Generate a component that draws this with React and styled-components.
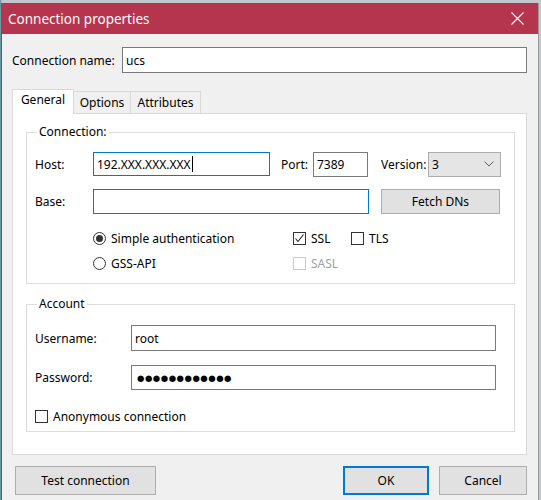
import React from 'react';
import styled, { createGlobalStyle } from 'styled-components';

const FONT = `"Noto Sans", "Open Sans", "DejaVu Sans", sans-serif`;

const colors = {
  TITLE: '#b5354f',
  FACE: '#f0f0f0',
  WHITE: '#ffffff',
  TAB_BORDER: '#d9d9d9',
  GROUP_BORDER: '#dcdcdc',
  INPUT_BORDER: '#7a7a7a',
  FOCUS: '#0078d7',
  BUTTON: '#e1e1e1',
  BUTTON_BORDER: '#adadad',
  DISABLED: '#a0a0a0',
  INK: '#000000',
};

const GlobalStyle = createGlobalStyle`
  html, body {
    margin: 0;
    padding: 0;
    background: #c3c6ca;
  }
  body {
    font-family: ${FONT};
    font-size: 12px;
    color: ${colors.INK};
  }
`;

const Desktop = styled.div`
  width: 541px;
  height: 500px;
  overflow: hidden;
  box-sizing: border-box;
  padding: 3px 2px 0 1px;
  background: linear-gradient(90deg, #3a8b95 0, #9aa3ad 1px, #c3c6ca 2px);
`;

const Window = styled.div`
  width: 538px;
  height: 497px;
  box-sizing: border-box;
  border-left: 1px solid ${colors.TITLE};
  border-right: 1px solid #9a9a9a;
  background: ${colors.FACE};
  display: flex;
  flex-direction: column;
`;

const TitleBar = styled.div`
  height: 31px;
  flex: none;
  background: ${colors.TITLE};
  color: ${colors.WHITE};
  font-size: 13.5px;
  display: flex;
  align-items: center;
  justify-content: space-between;
  padding: 0 14px 0 6px;
`;

const Body = styled.div`
  padding: 13px 11px 0 10px;
  display: flex;
  flex-direction: column;
`;

const NameRow = styled.div`
  display: flex;
  align-items: center;
  padding-left: 0;
`;

const Label = styled.div`
  width: ${p => p.w}px;
  flex: none;
  white-space: nowrap;
  color: ${p => (p.disabled ? colors.DISABLED : colors.INK)};
`;

const Field = styled.div`
  box-sizing: border-box;
  width: ${p => (p.w ? `${p.w}px` : 'auto')};
  flex: ${p => (p.w ? 'none' : '1')};
  height: ${p => p.h || 25}px;
  background: ${colors.WHITE};
  border: 1px solid ${p => (p.focus ? colors.FOCUS : colors.INPUT_BORDER)};
  padding-left: 3px;
  display: flex;
  align-items: center;
  white-space: nowrap;
  overflow: hidden;
`;

const Caret = styled.span`
  display: inline-block;
  width: 1px;
  height: 16px;
  background: ${colors.INK};
  margin-left: 1px;
`;

const Dots = styled.span`
  font-family: "DejaVu Sans", sans-serif;
  font-size: 8.5px;
  letter-spacing: 0.5px;
  padding-left: 2px;
`;

const TabStrip = styled.div`
  display: flex;
  align-items: flex-end;
  margin-top: 16px;
  height: 24px;
  position: relative;
  z-index: 1;
`;

const Tab = styled.div`
  box-sizing: border-box;
  width: ${p => p.w}px;
  height: ${p => (p.active ? 25 : 22)}px;
  margin-bottom: ${p => (p.active ? -1 : 0)}px;
  background: ${p => (p.active ? colors.WHITE : colors.FACE)};
  border: 1px solid ${colors.TAB_BORDER};
  border-bottom: none;
  margin-left: ${p => (p.active ? 0 : -1)}px;
  padding-top: ${p => (p.active ? 1 : 2)}px;
  text-align: center;
`;

const Panel = styled.div`
  box-sizing: border-box;
  height: 342px;
  background: ${colors.WHITE};
  border: 1px solid ${colors.TAB_BORDER};
  padding: 10px 11px 0 13px;
  display: flex;
  flex-direction: column;
  gap: 12px;
`;

const Group = styled.fieldset`
  margin: 0;
  border: 1px solid ${colors.GROUP_BORDER};
  padding: 0 8px ${p => p.pb}px 8px;
  display: flex;
  flex-direction: column;
  min-inline-size: 0;
`;

const Legend = styled.legend`
  padding: 0 2px;
  margin-left: 2px;
  line-height: 16px;
`;

const Row = styled.div`
  display: flex;
  align-items: center;
  margin-top: ${p => p.mt || 0}px;
  height: ${p => p.h || 16}px;
`;

const Gap = styled.div`
  width: ${p => p.w}px;
  flex: none;
`;

const Select = styled.div`
  box-sizing: border-box;
  width: 73px;
  height: 25px;
  background: #e5e5e5;
  border: 1px solid ${colors.BUTTON_BORDER};
  padding: 0 6px 0 3px;
  display: flex;
  align-items: center;
  justify-content: space-between;
`;

const Button = styled.div`
  box-sizing: border-box;
  width: ${p => p.w}px;
  height: ${p => p.h || 29}px;
  background: ${colors.BUTTON};
  border: ${p => (p.primary ? `2px solid ${colors.FOCUS}` : `1px solid ${colors.BUTTON_BORDER}`)};
  display: flex;
  align-items: center;
  justify-content: center;
  flex: none;
`;

const Choice = styled.div`
  display: flex;
  align-items: center;
  gap: 5px;
  width: ${p => (p.w ? `${p.w}px` : 'auto')};
  flex: none;
  color: ${p => (p.disabled ? colors.DISABLED : colors.INK)};
`;

const Box = styled.div`
  box-sizing: border-box;
  width: 13px;
  height: 13px;
  border: 1px solid ${p => (p.disabled ? '#cccccc' : '#333333')};
  background: ${colors.WHITE};
  display: flex;
  align-items: center;
  justify-content: center;
`;

const Round = styled(Box)`
  border-radius: 50%;
  &::after {
    content: '';
    width: 7px;
    height: 7px;
    border-radius: 50%;
    background: ${p => (p.checked ? '#333333' : 'transparent')};
  }
`;

const ButtonBar = styled.div`
  display: flex;
  align-items: center;
  margin-top: 11px;
  padding-left: 3px;
`;

const Spacer = styled.div`
  flex: 1;
`;

const CloseIcon = () => (
  <svg width="13" height="13" viewBox="0 0 13 13">
    <path d="M0.5 0.5 L12.5 12.5 M12.5 0.5 L0.5 12.5" stroke="#fff" strokeWidth="1.1" />
  </svg>
);

const Chevron = () => (
  <svg width="10" height="6" viewBox="0 0 10 6">
    <path d="M0.5 0.5 L5 5 L9.5 0.5" stroke="#606060" strokeWidth="1" fill="none" />
  </svg>
);

const Check = () => (
  <svg width="11" height="11" viewBox="0 0 11 11">
    <path d="M1.5 5.5 L4 8.5 L9.5 1.5" stroke="#222" strokeWidth="1.1" fill="none" />
  </svg>
);

const Checkbox = ({ checked, disabled, w, children }) => (
  <Choice w={w} disabled={disabled}>
    <Box disabled={disabled}>{checked && <Check />}</Box>
    {children}
  </Choice>
);

const Radio = ({ checked, w, children }) => (
  <Choice w={w}>
    <Round checked={checked} />
    {children}
  </Choice>
);

export default function App() {
  return (
    <>
      <GlobalStyle />
      <Desktop>
        <Window>
          <TitleBar>
            <span>Connection properties</span>
            <CloseIcon />
          </TitleBar>
          <Body>
            <NameRow>
              <Label w={110}>Connection name:</Label>
              <Field h={26}>ucs</Field>
            </NameRow>

            <TabStrip>
              <Tab active w={62}>General</Tab>
              <Tab w={58}>Options</Tab>
              <Tab w={71}>Attributes</Tab>
            </TabStrip>

            <Panel>
              <Group pb={12}>
                <Legend>Connection:</Legend>
                <Row h={24} mt={12}>
                  <Label w={58}>Host:</Label>
                  <Field w={177} h={24} focus>
                    192.XXX.XXX.XXX<Caret />
                  </Field>
                  <Gap w={11} />
                  <Label w={32}>Port:</Label>
                  <Field w={55} h={25}>7389</Field>
                  <Gap w={13} />
                  <Label w={47}>Version:</Label>
                  <Select>
                    <span>3</span>
                    <Chevron />
                  </Select>
                </Row>
                <Row h={25} mt={13}>
                  <Label w={58}>Base:</Label>
                  <Field w={276} h={25} focus />
                  <Gap w={12} />
                  <Button w={119} h={25}>Fetch DNs</Button>
                </Row>
                <Row mt={16}>
                  <Gap w={58} />
                  <Radio checked w={200}>Simple authentication</Radio>
                  <Checkbox checked w={58}>SSL</Checkbox>
                  <Checkbox>TLS</Checkbox>
                </Row>
                <Row mt={9}>
                  <Gap w={58} />
                  <Radio w={200}>GSS-API</Radio>
                  <Checkbox disabled>SASL</Checkbox>
                </Row>
              </Group>

              <Group pb={7}>
                <Legend>Account</Legend>
                <Row h={26} mt={13}>
                  <Label w={96}>Username:</Label>
                  <Field w={365} h={26}>root</Field>
                </Row>
                <Row h={25} mt={14}>
                  <Label w={96}>Password:</Label>
                  <Field w={365} h={25}>
                    <Dots>●●●●●●●●●●●●</Dots>
                  </Field>
                </Row>
                <Row mt={18}>
                  <Checkbox>Anonymous connection</Checkbox>
                </Row>
              </Group>
            </Panel>

            <ButtonBar>
              <Button w={141}>Test connection</Button>
              <Spacer />
              <Button primary w={86}>OK</Button>
              <Gap w={10} />
              <Button w={88}>Cancel</Button>
            </ButtonBar>
          </Body>
        </Window>
      </Desktop>
    </>
  );
}
